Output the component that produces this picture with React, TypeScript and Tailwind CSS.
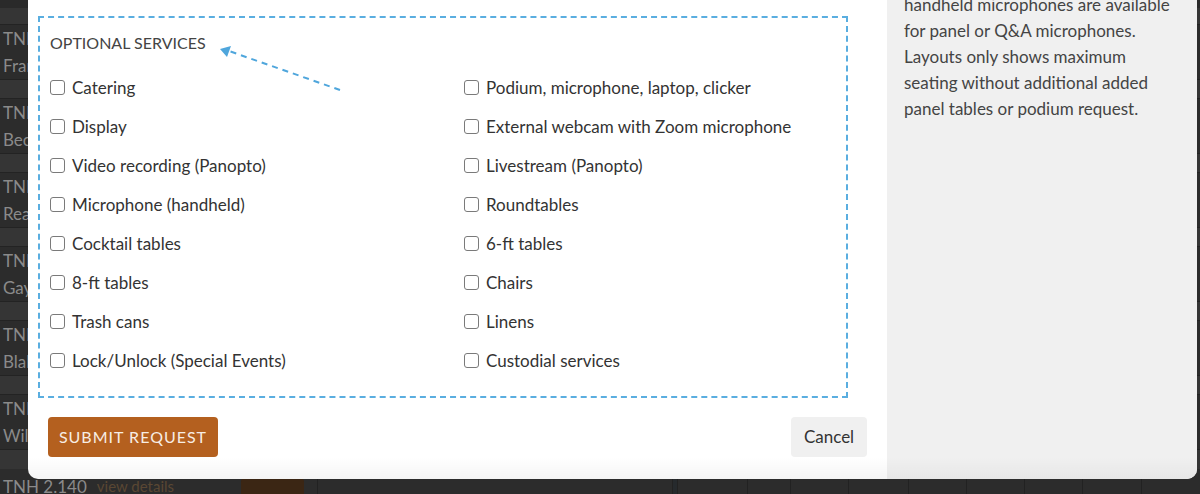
import { Fragment } from "react";

const leftServices = [
  "Catering",
  "Display",
  "Video recording (Panopto)",
  "Microphone (handheld)",
  "Cocktail tables",
  "8-ft tables",
  "Trash cans",
  "Lock/Unlock (Special Events)",
];

const rightServices = [
  "Podium, microphone, laptop, clicker",
  "External webcam with Zoom microphone",
  "Livestream (Panopto)",
  "Roundtables",
  "6-ft tables",
  "Chairs",
  "Linens",
  "Custodial services",
];

const noteLines = [
  "Rooms include a podium and two wireless",
  "handheld microphones are available",
  "for panel or Q&A microphones.",
  "Layouts only shows maximum",
  "seating without additional added",
  "panel tables or podium request.",
];

const bgRows = ["Francis", "Becker", "Reading", "Gaylord", "Blake", "Wilson"];

const font = { fontFamily: '"Lato", "Noto Sans", sans-serif' };

function ServiceCheckbox({ label }: { label: string }) {
  return (
    <label className="flex h-[39px] items-center gap-[7px] text-[17px] text-[#333]">
      <span className="h-[15px] w-[15px] shrink-0 rounded-[3px] border border-[#7a7a7a] bg-white" />
      <span>{label}</span>
    </label>
  );
}

// backdrop table that shows round the modal
function BackgroundTable() {
  return (
    <div className="flex h-full flex-col overflow-hidden bg-[#2b2b2b] text-[17px] leading-[27px] text-[#8a8a8a]">
      <div className="h-[8px] shrink-0 bg-[#2a2a2a]" />
      <div className="h-[17px] shrink-0 border-b border-[#232323] bg-[#353535]" />
      {bgRows.map((name, i) => (
        <Fragment key={name}>
          <div className="h-[55px] shrink-0 border-b border-[#232323] bg-[#2c2c2c] px-[3px]">
            <div>TNH</div>
            <div>{name}</div>
          </div>
          {i < bgRows.length - 1 && (
            <div className="h-[19px] shrink-0 border-b border-[#232323] bg-[#353535]" />
          )}
        </Fragment>
      ))}
      <div className="h-[19px] shrink-0 bg-[#353535]" />
      <div className="flex h-[30px] shrink-0 items-start whitespace-nowrap bg-[#2c2c2c] pt-[4px]">
        <span className="shrink-0 pl-[3px] text-[17px]">TNH 2.140</span>
        <span className="ml-[10px] shrink-0 text-[15px] text-[#5a4733]">view details</span>
        <span className="ml-[67px] mt-[5px] h-[24px] w-[63px] shrink-0 rounded-t-[4px] bg-[#3b2614]" />
        <div className="ml-[13px] mt-[-4px] flex h-[30px] min-w-0 flex-1">
          {[355, 5, 70, 43, 58, 60, 58, 58, 58, 59, 59].map((w, i) => (
            <div
              key={i}
              className={`h-full shrink-0 border-l border-[#222] ${i === 1 ? "bg-[#262a2d]" : ""}`}
              style={{ width: w }}
            />
          ))}
        </div>
      </div>
    </div>
  );
}

function DashedArrow() {
  return (
    <svg
      className="pointer-events-none absolute left-[-28px] top-[34px]"
      width="400"
      height="120"
      viewBox="0 0 400 120"
    >
      <line
        x1="340"
        y1="90"
        x2="229"
        y2="51"
        stroke="#4fa6dc"
        strokeWidth="2"
        strokeDasharray="6 5"
      />
      <polygon points="220,49 231,46 227,57" fill="#4fa6dc" />
    </svg>
  );
}

export default function App() {
  return (
    <div className="relative h-[494px] w-[1200px] overflow-hidden" style={font}>
      <BackgroundTable />

      <div className="absolute left-[28px] top-[-34px] flex h-[513px] w-[1169px] overflow-hidden rounded-[10px] bg-white">
        <div className="flex w-[859px] shrink-0 flex-col px-[20px] pt-[50px]">
          <div className="ml-[-10px] w-[810px] border-2 border-dashed border-[#5aaee0] px-[10px] pb-[16px] pt-[14px]">
            <h3 className="text-[16px] leading-[22px] text-[#444]">OPTIONAL SERVICES</h3>
            <div className="mt-[14px] grid grid-cols-[414px_1fr]">
              <div className="flex flex-col">
                {leftServices.map((s) => (
                  <ServiceCheckbox key={s} label={s} />
                ))}
              </div>
              <div className="flex flex-col">
                {rightServices.map((s) => (
                  <ServiceCheckbox key={s} label={s} />
                ))}
              </div>
            </div>
          </div>

          <div className="mt-[19px] flex items-center justify-between">
            <button className="h-[40px] w-[170px] rounded-[4px] bg-[#b4601f] text-[16px] tracking-[1px] text-[#f7ede4]">
              SUBMIT REQUEST
            </button>
            <button className="h-[40px] w-[76px] rounded-[4px] bg-[#f0f0f0] text-[17px] text-[#333]">
              Cancel
            </button>
          </div>
        </div>

        <div className="min-w-0 flex-1 overflow-hidden bg-[#f0f0f0] pl-[17px] pr-[10px] text-[17px] leading-[26px] text-[#444]">
          {noteLines.map((l) => (
            <div key={l} className="whitespace-nowrap">
              {l}
            </div>
          ))}
        </div>

        <DashedArrow />
        <div className="pointer-events-none absolute inset-x-0 bottom-0 h-[22px] bg-gradient-to-b from-transparent to-black/[0.04]" />
      </div>
    </div>
  );
}
